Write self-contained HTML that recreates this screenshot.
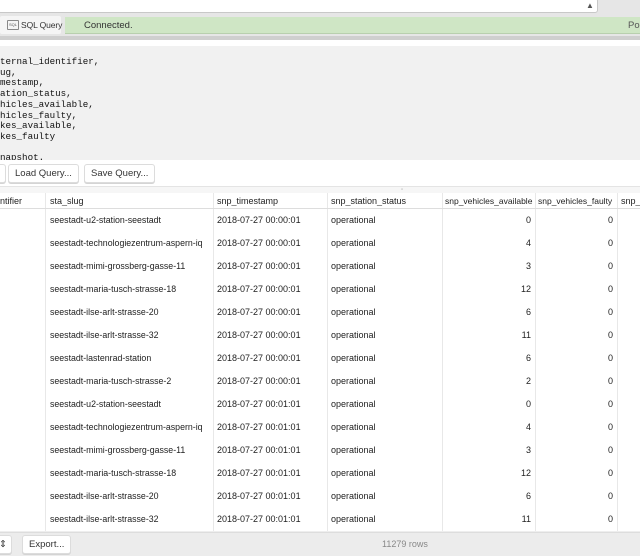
<!DOCTYPE html><html><head><style>
body{margin:0;width:640px;height:555px;overflow:hidden;background:#fff;font-family:"Liberation Sans",sans-serif;font-size:9px;color:#222;position:relative}
.a{position:absolute}
.code{font-family:"Liberation Mono",monospace;font-size:9.2px;line-height:10.7px;white-space:pre;color:#111}
.btn{position:absolute;background:#fff;border:1px solid #dcdcdc;border-radius:3px;height:17px;line-height:17px;font-size:9.5px;padding:0 6px;color:#333;box-shadow:0 1px 0 #d4d4d4}
.row{position:absolute;left:0;width:640px;height:23px;border-bottom:1px solid #eee;background:#fff}
.c{position:absolute;top:6px;font-size:9px;white-space:nowrap;overflow:hidden}
.v{position:absolute;top:0;width:1px;height:100%;background:#e8e8e8}
</style></head><body>
<div class="a" style="left:0;top:0;width:640px;height:40px;background:#e6e6e6"></div>
<div class="a" style="left:-2px;top:-2px;width:598px;height:13px;background:#fff;border:1px solid #c8c8c8;border-radius:3px"></div>
<div class="a" style="left:586px;top:1px;font-size:8px;color:#555">▲</div>
<div class="a" style="left:65px;top:17px;width:580px;height:16px;background:#cfe6c5;border-bottom:1px solid #b8cfae"></div>
<div class="a" style="left:0;top:16px;width:61px;height:18px;background:#f5f5f5;border-radius:2px"></div>
<div class="a" style="left:7px;top:20px;width:10px;height:8px;border:1px solid #888;border-radius:1px;font-size:4px;line-height:8px;text-align:center;color:#555">SQL</div>
<div class="a" style="left:21px;top:20px;font-size:8.5px;color:#333;letter-spacing:-0.1px">SQL Query</div>
<div class="a" style="left:84px;top:20px;font-size:9.5px;color:#333">Connected.</div>
<div class="a" style="left:628px;top:20px;font-size:9.5px;color:#555">Po</div>
<div class="a" style="left:0;top:36px;width:640px;height:4px;background:#cfcfcf"></div>
<div class="a" style="left:0;top:40px;width:640px;height:6px;background:#fff"></div>
<div class="a" style="left:0;top:46px;width:640px;height:114px;background:#f1f1f1"></div>
<div class="a code" style="left:0;top:57px">ternal_identifier,
ug,
mestamp,
ation_status,
hicles_available,
hicles_faulty,
kes_available,
kes_faulty

napshot.</div>
<div class="a" style="left:0;top:160px;width:640px;height:26px;background:#fff"></div>
<div class="btn" style="left:-8px;top:164px;width:0px"></div>
<div class="btn" style="left:8px;top:164px">Load Query...</div>
<div class="btn" style="left:84px;top:164px">Save Query...</div>
<div class="a" style="left:0;top:186px;width:640px;height:7px;background:#f6f6f6;border-top:1px solid #e4e4e4"></div>
<div class="a" style="left:401px;top:187px;font-size:6px;color:#aaa">▫</div>
<div class="row" style="top:193px;height:15px;border-bottom:1px solid #ddd">
<div class="c" style="top:3px;left:0">ntifier</div><div class="c" style="top:3px;left:50px">sta_slug</div><div class="c" style="top:3px;left:217px">snp_timestamp</div><div class="c" style="top:3px;left:331px">snp_station_status</div><div class="c" style="top:3px;left:445px;width:90px;font-size:8.5px">snp_vehicles_available</div><div class="c" style="top:3px;left:538px;width:78px;font-size:8.5px">snp_vehicles_faulty</div><div class="c" style="top:3px;left:621px">snp_b</div>
<div class="v" style="left:45px"></div><div class="v" style="left:213px"></div><div class="v" style="left:327px"></div><div class="v" style="left:442px"></div><div class="v" style="left:535px"></div><div class="v" style="left:617px"></div></div>
<div id="rows"></div>
<div class="a" style="left:0;top:532px;width:640px;height:23px;background:#ececec;border-top:1px solid #ddd"></div>
<div class="btn" style="left:-8px;top:535px;width:10px;text-align:right;padding:0 4px">⇕</div>
<div class="btn" style="left:22px;top:535px">Export...</div>
<div class="a" style="left:382px;top:539px;font-size:9px;color:#888">11279 rows</div>
<script>
var d=[["seestadt-u2-station-seestadt","00:00:01",0],["seestadt-technologiezentrum-aspern-iq","00:00:01",4],["seestadt-mimi-grossberg-gasse-11","00:00:01",3],["seestadt-maria-tusch-strasse-18","00:00:01",12],["seestadt-ilse-arlt-strasse-20","00:00:01",6],["seestadt-ilse-arlt-strasse-32","00:00:01",11],["seestadt-lastenrad-station","00:00:01",6],["seestadt-maria-tusch-strasse-2","00:00:01",2],["seestadt-u2-station-seestadt","00:01:01",0],["seestadt-technologiezentrum-aspern-iq","00:01:01",4],["seestadt-mimi-grossberg-gasse-11","00:01:01",3],["seestadt-maria-tusch-strasse-18","00:01:01",12],["seestadt-ilse-arlt-strasse-20","00:01:01",6],["seestadt-ilse-arlt-strasse-32","00:01:01",11]];
var h="";d.forEach(function(r,i){h+='<div class="row" style="top:'+(209+23*i)+'px"><div class="c" style="left:50px;width:162px;font-size:8.8px">'+r[0]+'</div><div class="c" style="left:217px">2018-07-27 '+r[1]+'</div><div class="c" style="left:331px">operational</div><div class="c" style="left:446px;width:85px;text-align:right">'+r[2]+'</div><div class="c" style="left:539px;width:74px;text-align:right">0</div><div class="v" style="left:45px"></div><div class="v" style="left:213px"></div><div class="v" style="left:327px"></div><div class="v" style="left:442px"></div><div class="v" style="left:535px"></div><div class="v" style="left:617px"></div></div>';});
document.getElementById("rows").innerHTML=h;
</script>
</body></html>
